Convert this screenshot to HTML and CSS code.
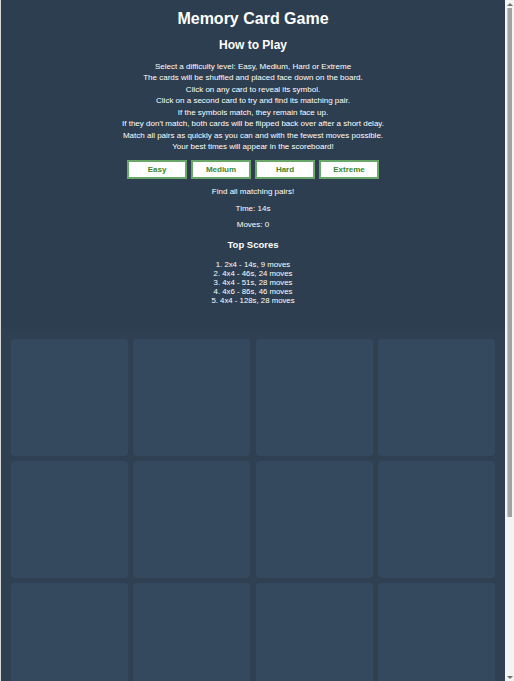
FILE: index.html
```html
<!DOCTYPE html>
<html lang="en">
<head>
<meta charset="utf-8">
<title>Memory Card Game</title>
<link rel="stylesheet" href="styles.css">
</head>
<body>
<main class="app">
  <h1 class="title">Memory Card Game</h1>
  <h2 class="subtitle">How to Play</h2>
  <div class="instructions">
    <p>Select a difficulty level: Easy, Medium, Hard or Extreme</p>
    <p>The cards will be shuffled and placed face down on the board.</p>
    <p>Click on any card to reveal its symbol.</p>
    <p>Click on a second card to try and find its matching pair.</p>
    <p>If the symbols match, they remain face up.</p>
    <p>If they don't match, both cards will be flipped back over after a short delay.</p>
    <p>Match all pairs as quickly as you can and with the fewest moves possible.</p>
    <p>Your best times will appear in the scoreboard!</p>
  </div>
  <div class="levels">
    <button class="level-btn">Easy</button>
    <button class="level-btn">Medium</button>
    <button class="level-btn">Hard</button>
    <button class="level-btn">Extreme</button>
  </div>
  <div class="status">
    <p>Find all matching pairs!</p>
    <p>Time: 14s</p>
    <p>Moves: 0</p>
  </div>
  <h3 class="scores-title">Top Scores</h3>
  <div class="scores">
    <div>1. 2x4 - 14s, 9 moves</div>
    <div>2. 4x4 - 46s, 24 moves</div>
    <div>3. 4x4 - 51s, 28 moves</div>
    <div>4. 4x6 - 86s, 46 moves</div>
    <div>5. 4x4 - 128s, 28 moves</div>
  </div>
  <div class="board">
    <div class="card"></div><div class="card"></div><div class="card"></div><div class="card"></div>
    <div class="card"></div><div class="card"></div><div class="card"></div><div class="card"></div>
    <div class="card"></div><div class="card"></div><div class="card"></div><div class="card"></div>
    <div class="card"></div><div class="card"></div><div class="card"></div><div class="card"></div>
  </div>
</main>
<div class="scrollbar" aria-hidden="true">
  <div class="sb-arrow sb-up"></div>
  <div class="sb-track"><div class="sb-thumb"></div></div>
  <div class="sb-arrow sb-down"></div>
</div>
</body>
</html>
```
FILE: styles.css
```css
html {
  background: #2c3e50;
  border-left: 1px solid #d6d6d6;
}
body {
  margin: 0;
  padding-right: 9px;
  font-family: "Liberation Sans", Arial, sans-serif;
  color: #ffffff;
  background: #2c3e50;
}
.app {
  display: flex;
  flex-direction: column;
  align-items: center;
  text-align: center;
  padding-top: 10px;
}
.title {
  margin: 0;
  font-size: 16px;
  line-height: 18px;
  font-weight: bold;
}
.subtitle {
  margin: 9.5px 0 0;
  font-size: 12px;
  line-height: 14px;
  font-weight: bold;
}
.instructions {
  margin-top: 9px;
  font-size: 8px;
  line-height: 11.5px;
}
.instructions p {
  margin: 0;
}
.levels {
  display: flex;
  gap: 4px;
  margin-top: 7.3px;
}
.level-btn {
  width: 60px;
  height: 19px;
  padding: 0;
  background: #ffffff;
  border: 2px solid #6aa86a;
  color: #3a8730;
  font-family: "Liberation Sans", Arial, sans-serif;
  font-size: 8px;
  font-weight: bold;
  cursor: pointer;
}
.status {
  display: flex;
  flex-direction: column;
  gap: 6.7px;
  margin-top: 8.1px;
  font-size: 8px;
  line-height: 10px;
}
.status p {
  margin: 0;
}
.scores-title {
  margin: 9.1px 0 0;
  font-size: 9.5px;
  line-height: 12px;
  font-weight: bold;
}
.scores {
  margin-top: 9.1px;
  font-size: 7.8px;
  line-height: 9px;
}
.board {
  align-self: stretch;
  margin-top: 24px;
  padding: 10px;
  display: grid;
  grid-template-columns: repeat(4, 1fr);
  column-gap: 5.3px;
  row-gap: 4.5px;
  background: #2e4052;
}
.card {
  aspect-ratio: 1;
  background: #34495e;
  border-radius: 4px;
}

/* fake classic scrollbar overlay */
.scrollbar {
  position: fixed;
  top: 0;
  right: 0;
  width: 9px;
  height: 100vh;
  display: flex;
  flex-direction: column;
  background: #f4f4f4;
}
.sb-arrow {
  height: 8px;
  flex: none;
  display: flex;
  justify-content: center;
  align-items: center;
}
.sb-up::before,
.sb-down::before {
  content: "";
  width: 0;
  height: 0;
  border-left: 3px solid transparent;
  border-right: 3px solid transparent;
}
.sb-up::before {
  border-bottom: 3px solid #6e6e6e;
}
.sb-down::before {
  border-top: 3px solid #6e6e6e;
}
.sb-track {
  flex: 1;
  display: flex;
  justify-content: center;
}
.sb-thumb {
  width: 5px;
  height: 509px;
  background: #a2a2a2;
  border-left: 1px solid #c4c4c4;
  box-sizing: border-box;
}
```
